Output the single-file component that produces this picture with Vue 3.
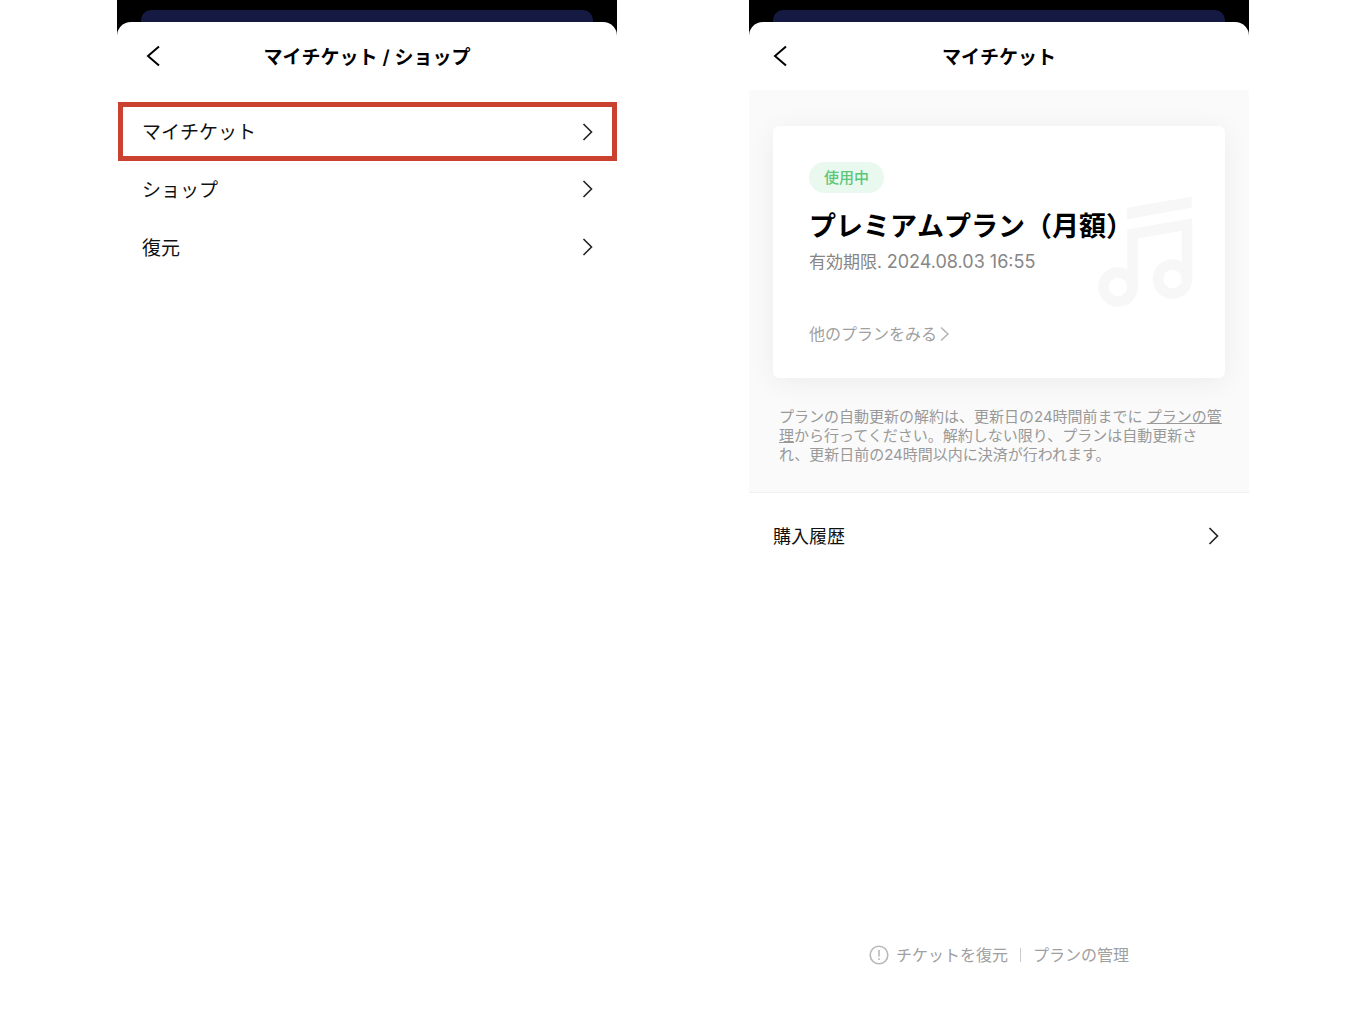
<script setup>
const menu = [
  { label: 'マイチケット', current: true },
  { label: 'ショップ', current: false },
  { label: '復元', current: false },
]
</script>

<template>
  <main class="page" lang="ja">
    <section class="screen">
      <div class="backdrop"><div class="behind"></div></div>
      <div class="sheet">
        <header class="bar bar-inset">
          <button class="back" type="button" aria-label="戻る">
            <svg width="16" height="24" viewBox="0 0 16 24"><path d="M14 2.5 L3 12 L14 21.5" /></svg>
          </button>
          <h1>マイチケット / ショップ</h1>
        </header>
        <nav class="menu">
          <a v-for="item in menu" :key="item.label" href="#" class="row" :class="{ current: item.current }">
            <span class="label">{{ item.label }}</span>
            <svg class="chevron" width="12" height="20" viewBox="0 0 12 20"><path d="M1.5 2 L9.5 10 L1.5 18" /></svg>
          </a>
        </nav>
      </div>
    </section>

    <section class="screen">
      <div class="backdrop"><div class="behind"></div></div>
      <div class="sheet">
        <header class="bar">
          <button class="back" type="button" aria-label="戻る">
            <svg width="16" height="24" viewBox="0 0 16 24"><path d="M14 2.5 L3 12 L14 21.5" /></svg>
          </button>
          <h1>マイチケット</h1>
        </header>

        <div class="plan">
          <article class="card">
            <svg class="note-art" width="96" height="112" viewBox="0 0 96 112" aria-hidden="true">
              <path d="M30.5 12.5 L94 1.5 V11 L30.5 22.5 Z" fill="#f7f7f7" stroke="#f7f7f7" stroke-width="1.5" stroke-linejoin="round" />
              <path d="M35.5 91 V38 L90 28.5 V83" fill="none" stroke="#f7f7f7" stroke-width="10.5" />
              <circle cx="21" cy="91" r="14.5" fill="none" stroke="#f7f7f7" stroke-width="10.5" />
              <circle cx="75.5" cy="83" r="14.5" fill="none" stroke="#f7f7f7" stroke-width="10.5" />
            </svg>
            <span class="badge">使用中</span>
            <h2>プレミアムプラン（月額）</h2>
            <p class="expiry">有効期限. <time datetime="2024-08-03T16:55">2024.08.03 16:55</time></p>
            <a href="#" class="others">
              <span>他のプランをみる</span>
              <svg width="12" height="16" viewBox="0 0 12 16"><path d="M2 1.5 L9 8 L2 14.5" /></svg>
            </a>
          </article>
          <p class="terms">
            プランの自動更新の解約は、更新日の24時間前までに <a href="#">プランの管<br />理</a>から行ってください。解約しない限り、プランは自動更新さ<br />れ、更新日前の24時間以内に決済が行われます。
          </p>
        </div>

        <a href="#" class="history">
          <span class="label">購入履歴</span>
          <svg class="chevron" width="12" height="20" viewBox="0 0 12 20"><path d="M1.5 2 L9.5 10 L1.5 18" /></svg>
        </a>

        <footer class="foot">
          <svg width="20" height="20" viewBox="0 0 20 20" aria-hidden="true">
            <circle cx="10" cy="10" r="8.8" />
            <path d="M10 5 V11.5 M10 13.2 V15" />
          </svg>
          <a href="#">チケットを復元</a>
          <span class="divider"></span>
          <a href="#">プランの管理</a>
        </footer>
      </div>
    </section>
  </main>
</template>

<style>
body {
  background: #fff;
}
</style>

<style scoped>
.page {
  display: grid;
  grid-template-columns: 1fr 1fr;
  gap: 132px;
  box-sizing: border-box;
  min-height: 100vh;
  padding: 0 113px 0 117px;
  font-family: Inter, "Noto Sans CJK JP", sans-serif;
  color: #111;
}
a {
  color: inherit;
  text-decoration: none;
}
h1,
h2,
p {
  margin: 0;
}
svg {
  display: block;
  flex: none;
}
.screen {
  display: flex;
  flex-direction: column;
}
.backdrop {
  height: 28px;
  padding: 10px 24px 0;
  background: #000;
}
.behind {
  height: 28px;
  border-radius: 10px 10px 0 0;
  background: #141a42;
}
.sheet {
  display: flex;
  flex: 1;
  flex-direction: column;
  margin-top: -16px;
  border-radius: 14px 14px 0 0;
  background: #fff;
}
.bar {
  display: grid;
  grid-template-columns: 20px 1fr 20px;
  align-items: center;
  height: 68px;
  padding: 0 23px;
}
.bar-inset {
  padding: 0 28px;
}
.back {
  padding: 0;
  border: 0;
  background: none;
}
.back path {
  fill: none;
  stroke: #000;
  stroke-width: 2;
}
h1 {
  padding-top: 4px;
  font-size: 19px;
  font-weight: 600;
  line-height: 28px;
  text-align: center;
  color: #000;
}
.menu {
  padding-top: 12px;
}
.row {
  display: flex;
  align-items: center;
  justify-content: space-between;
  box-sizing: border-box;
  height: 58px;
  padding: 0 23px 0 25px;
  font-size: 19px;
}
.label {
  padding-bottom: 2px;
}
.row.current {
  height: 59px;
  margin: 0 0 -1px 1px;
  padding: 0 18px 0 19px;
  border: 5px solid #cb4130;
}
.chevron path {
  fill: none;
  stroke: #222;
  stroke-width: 1.6;
}
.plan {
  padding: 36px 24px 28px;
  border-bottom: 1px solid #f0f0f0;
  background: #fafafa;
}
.card {
  position: relative;
  padding: 36px 36px 31px;
  border-radius: 6px;
  background: #fff;
  box-shadow: 0 4px 28px rgba(0, 0, 0, 0.06);
}
.note-art {
  position: absolute;
  top: 70px;
  right: 32px;
}
.badge {
  display: block;
  width: fit-content;
  padding: 0 15px;
  border-radius: 16px;
  background: #e9f9ef;
  font-size: 15px;
  font-weight: 500;
  line-height: 31px;
  color: #5cc777;
}
h2 {
  position: relative;
  margin-top: 12px;
  font-family: "Noto Sans CJK JP", sans-serif;
  font-size: 27px;
  font-weight: 600;
  font-kerning: none;
  line-height: 40px;
  white-space: nowrap;
  color: #000;
}
.expiry {
  margin-top: 4px;
  font-size: 17px;
  line-height: 26px;
  color: #868686;
}
.expiry time {
  font-size: 18px;
}
.others {
  display: flex;
  align-items: center;
  gap: 2px;
  width: fit-content;
  margin-top: 46px;
  font-size: 16px;
  line-height: 26px;
  color: #a0a0a0;
}
.others path {
  fill: none;
  stroke: #b4b4b4;
  stroke-width: 1.5;
}
.terms {
  margin-top: 29px;
  padding-left: 6px;
  font-size: 15px;
  line-height: 19px;
  white-space: nowrap;
  color: #999;
}
.terms a {
  text-decoration: underline;
}
.history {
  display: flex;
  align-items: center;
  justify-content: space-between;
  height: 86px;
  padding: 0 29px 0 24px;
  font-size: 18px;
}
.foot {
  display: flex;
  align-items: center;
  justify-content: center;
  margin-top: auto;
  padding-bottom: 42px;
  font-size: 16px;
  line-height: 26px;
  color: #a0a0a0;
}
.foot svg {
  margin-right: 7px;
  fill: none;
  stroke: #b8b8b8;
  stroke-width: 1.6;
}
.divider {
  width: 1px;
  height: 14px;
  margin: 0 12px;
  background: #ccc;
}
</style>
